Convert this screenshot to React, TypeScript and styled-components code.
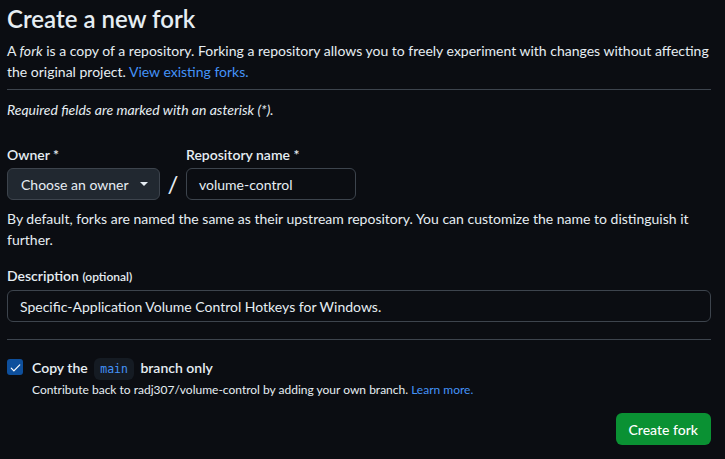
import React from 'react'
import styled, { createGlobalStyle } from 'styled-components'

const GlobalStyle = createGlobalStyle`
  html, body {
    margin: 0;
    padding: 0;
    background: #0b0d12;
  }
  body {
    font-family: Lato, 'Noto Sans', sans-serif;
    color: #e6edf3;
    font-size: 14px;
  }
`

const Page = styled.div`
  width: 704px;
  padding: 2px 0 0 7px;
`

const Title = styled.h1`
  margin: 0;
  font-size: 24px;
  line-height: 34px;
  font-weight: 600;
`

const Lead = styled.p`
  margin: 4px 0 0;
  line-height: 21px;
`

const Link = styled.a`
  color: #4493f8;
  text-decoration: none;
`

const Divider = styled.hr<{ $top: number }>`
  margin: ${(p) => p.$top}px 0 0;
  border: 0;
  border-top: 1px solid #3d444d;
`

const Hint = styled.p`
  margin: 9px 0 0;
  font-style: italic;
  line-height: 21px;
`

const NameRow = styled.div`
  display: flex;
  align-items: flex-end;
  margin-top: 25px;
`

const Field = styled.div`
  display: flex;
  flex-direction: column;
`

const Label = styled.label`
  font-weight: 600;
  line-height: 20px;
  margin-bottom: 3px;
`

const Optional = styled.span`
  font-size: 12px;
`

const OwnerButton = styled.button`
  display: flex;
  align-items: center;
  justify-content: space-between;
  height: 32px;
  width: 153px;
  box-sizing: border-box;
  padding: 0 11px 0 13px;
  background: #212830;
  border: 1px solid #3d444d;
  border-radius: 6px;
  color: #e6edf3;
  font: inherit;
  white-space: nowrap;
`

const Caret = styled.span`
  width: 0;
  height: 0;
  border-left: 4px solid transparent;
  border-right: 4px solid transparent;
  border-top: 4px solid #e6edf3;
`

const Slash = styled.span`
  font-size: 24px;
  line-height: 32px;
  width: 26px;
  text-align: center;
`

const TextInput = styled.div<{ $width?: number }>`
  height: 32px;
  box-sizing: border-box;
  width: ${(p) => (p.$width ? `${p.$width}px` : '100%')};
  display: flex;
  align-items: center;
  padding: 0 12px;
  background: #0b0d12;
  border: 1px solid #3d444d;
  border-radius: 6px;
  white-space: nowrap;
`

const Note = styled.p`
  margin: 8px 0 0;
  line-height: 21px;
`

const DescField = styled(Field)`
  margin-top: 16px;
`

const CheckRow = styled.div`
  display: flex;
  gap: 9px;
  margin-top: 17px;
`

const Box = styled.span`
  flex: none;
  width: 16px;
  height: 16px;
  margin-top: 2px;
  border-radius: 3px;
  background: #0e4f9c;
  display: flex;
  align-items: center;
  justify-content: center;
`

const CheckText = styled.div`
  display: flex;
  flex-direction: column;
`

const CheckLabel = styled.span`
  font-weight: 600;
  line-height: 22px;
`

const Code = styled.code`
  font-family: 'DejaVu Sans Mono', 'Liberation Mono', monospace;
  font-size: 11.5px;
  font-weight: 400;
  color: #4493f8;
  background: #151b23;
  border-radius: 6px;
  padding: 4px 6px;
  margin: 0 3px;
`

const Sub = styled.span`
  font-size: 12px;
  line-height: 18px;
  margin-top: 1px;
`

const Footer = styled.div`
  display: flex;
  justify-content: flex-end;
  margin-top: 14px;
`

const PrimaryButton = styled.button`
  height: 32px;
  padding: 0 13px;
  background: #0a9133;
  border: 0;
  border-radius: 6px;
  color: #ffffff;
  font: inherit;
  font-weight: 500;
`

const App = () => (
  <>
    <GlobalStyle />
    <Page>
      <Title>Create a new fork</Title>
      <Lead>
        A <em>fork</em> is a copy of a repository. Forking a repository allows you to freely
        experiment with changes without affecting the original project.{' '}
        <Link href="#">View existing forks.</Link>
      </Lead>
      <Divider $top={7} />
      <Hint>Required fields are marked with an asterisk (*).</Hint>
      <NameRow>
        <Field>
          <Label>Owner *</Label>
          <OwnerButton>
            Choose an owner <Caret />
          </OwnerButton>
        </Field>
        <Slash>/</Slash>
        <Field>
          <Label>Repository name *</Label>
          <TextInput $width={170}>volume-control</TextInput>
        </Field>
      </NameRow>
      <Note>
        By default, forks are named the same as their upstream repository. You can customize the
        name to distinguish it further.
      </Note>
      <DescField>
        <Label>
          Description <Optional>(optional)</Optional>
        </Label>
        <TextInput>Specific-Application Volume Control Hotkeys for Windows.</TextInput>
      </DescField>
      <Divider $top={17} />
      <CheckRow>
        <Box>
          <svg width="13" height="13" viewBox="0 0 16 16" fill="#ffffff">
            <path d="M13.78 4.22a.75.75 0 0 1 0 1.06l-7.25 7.25a.75.75 0 0 1-1.06 0L2.22 9.28a.75.75 0 0 1 1.06-1.06L6 10.94l6.72-6.72a.75.75 0 0 1 1.06 0Z" />
          </svg>
        </Box>
        <CheckText>
          <CheckLabel>
            Copy the <Code>main</Code> branch only
          </CheckLabel>
          <Sub>
            Contribute back to radj307/volume-control by adding your own branch.{' '}
            <Link href="#">Learn more.</Link>
          </Sub>
        </CheckText>
      </CheckRow>
      <Footer>
        <PrimaryButton>Create fork</PrimaryButton>
      </Footer>
    </Page>
  </>
)

export default App
